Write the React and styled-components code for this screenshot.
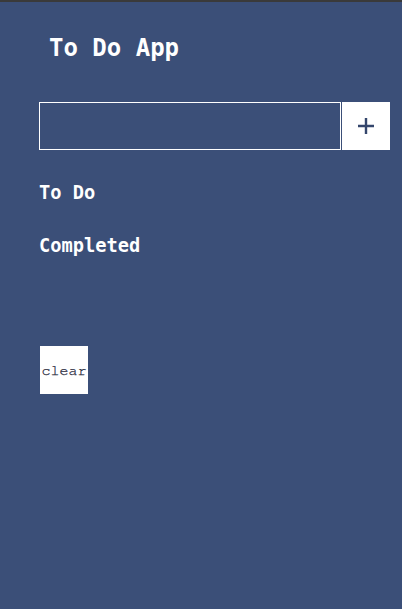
import React, { useState } from 'react';
import styled, { createGlobalStyle } from 'styled-components';

const GlobalStyle = createGlobalStyle`
  html, body {
    margin: 0;
    padding: 0;
    background: #3b4f78;
  }
  body {
    border-top: 2px solid #3a3a3a;
    min-height: 607px;
    font-family: "DejaVu Sans Mono", monospace;
  }
`;

const Page = styled.div`
  padding: 0 12px 0 39px;
`;

const Title = styled.h1`
  margin: 0;
  padding: 32px 0 0 10px;
  font-size: 24px;
  line-height: 28px;
  font-weight: bold;
  color: #ffffff;
  font-family: "DejaVu Sans Mono", monospace;
`;

const AddRow = styled.form`
  display: flex;
  margin-top: 40px;
`;

const TaskInput = styled.input`
  box-sizing: border-box;
  width: 302px;
  height: 48px;
  border: 1px solid #ffffff;
  background: transparent;
  color: #ffffff;
  padding: 0 8px;
  font-size: 16px;
  outline: none;
`;

const SquareButton = styled.button`
  width: 48px;
  height: 48px;
  border: none;
  background: #ffffff;
  padding: 0;
  margin-left: ${p => p.$gap || 0}px;
  display: flex;
  align-items: center;
  justify-content: center;
  color: #1c2436;
  font-family: "Nimbus Mono PS", "FreeMono", "Liberation Mono", "Courier New", monospace;
  font-size: 15px;
  -webkit-text-stroke: 0.25px #1c2436;
  cursor: pointer;
`;

const Section = styled.h3`
  margin: ${p => p.$top}px 0 0 0;
  font-size: 18.7px;
  line-height: 22px;
  font-weight: bold;
  color: #ffffff;
  font-family: "DejaVu Sans Mono", monospace;
`;

const List = styled.ul`
  margin: 0;
  padding: 0;
  list-style: none;
`;

const ClearWrap = styled.div`
  margin-top: 89px;
  padding-left: 1px;
`;

const PlusIcon = () => (
  <svg width="18" height="18" viewBox="0 0 18 18">
    <path d="M9 1 V17 M1 9 H17" stroke="#34466c" strokeWidth="2.4" fill="none" />
  </svg>
);

export default function App() {
  const [text, setText] = useState('');
  const [todos, setTodos] = useState([]);
  const [done, setDone] = useState([]);

  const add = e => {
    e.preventDefault();
    if (!text.trim()) return;
    setTodos([...todos, text]);
    setText('');
  };

  return (
    <>
      <GlobalStyle />
      <Page>
        <Title>To Do App</Title>
        <AddRow onSubmit={add}>
          <TaskInput value={text} onChange={e => setText(e.target.value)} />
          <SquareButton type="submit" $gap={1} aria-label="add">
            <PlusIcon />
          </SquareButton>
        </AddRow>
        <Section $top={32}>To Do</Section>
        <List>
          {todos.map((t, i) => <li key={i}>{t}</li>)}
        </List>
        <Section $top={31}>Completed</Section>
        <List>
          {done.map((t, i) => <li key={i}>{t}</li>)}
        </List>
        <ClearWrap>
          <SquareButton type="button" onClick={() => { setTodos([]); setDone([]); }}>
            clear
          </SquareButton>
        </ClearWrap>
      </Page>
    </>
  );
}
